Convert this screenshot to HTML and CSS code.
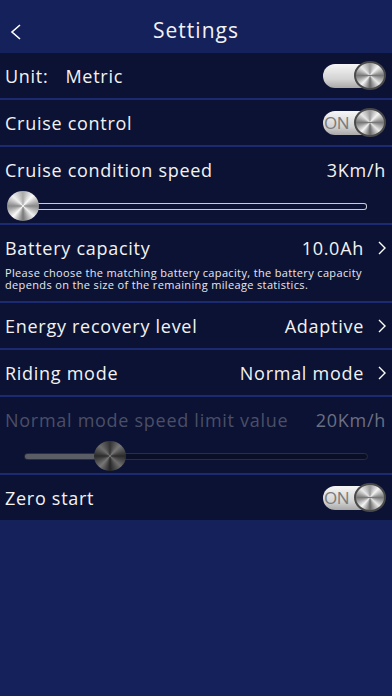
FILE: index.html
```html
<!DOCTYPE html>
<html>
<head>
<meta charset="utf-8">
<link rel="stylesheet" href="styles.css">
</head>
<body>
<div class="header">
  <svg class="back" width="14" height="18" viewBox="0 0 14 18"><path d="M11 2 L3 9 L11 16" fill="none" stroke="#fff" stroke-width="1.6"/></svg>
  <div class="title">Settings</div>
</div>
<div class="list">
  <div class="row">
    <div class="label">Unit:<span class="unitval">Metric</span></div>
    <div class="toggle"><span class="knob"></span></div>
  </div>
  <div class="row">
    <div class="label">Cruise control</div>
    <div class="toggle"><span class="on">ON</span><span class="knob"></span></div>
  </div>
  <div class="row tall">
    <div class="line">
      <div class="label">Cruise condition speed</div>
      <div class="value">3Km/h</div>
    </div>
    <div class="slider">
      <div class="track"></div>
      <span class="sknob first"></span>
    </div>
  </div>
  <div class="row tall">
    <div class="line">
      <div class="label">Battery capacity</div>
      <div class="value">10.0Ah <svg class="chev" width="10" height="16" viewBox="0 0 10 16"><path d="M2 2 L8 8 L2 14" fill="none" stroke="#fff" stroke-width="1.4"/></svg></div>
    </div>
    <p class="desc">Please choose the matching battery capacity, the battery capacity depends on the size of the remaining mileage statistics.</p>
  </div>
  <div class="row">
    <div class="label">Energy recovery level</div>
    <div class="value">Adaptive <svg class="chev" width="10" height="16" viewBox="0 0 10 16"><path d="M2 2 L8 8 L2 14" fill="none" stroke="#fff" stroke-width="1.4"/></svg></div>
  </div>
  <div class="row">
    <div class="label">Riding mode</div>
    <div class="value">Normal mode <svg class="chev" width="10" height="16" viewBox="0 0 10 16"><path d="M2 2 L8 8 L2 14" fill="none" stroke="#fff" stroke-width="1.4"/></svg></div>
  </div>
  <div class="row tall disabled">
    <div class="line">
      <div class="label dim">Normal mode speed limit value</div>
      <div class="value dim2">20Km/h</div>
    </div>
    <div class="slider s2">
      <div class="track dark"><div class="fill" style="width:24%"></div></div>
      <span class="sknob second" style="left:24%"></span>
    </div>
  </div>
  <div class="row">
    <div class="label">Zero start</div>
    <div class="toggle"><span class="on">ON</span><span class="knob"></span></div>
  </div>
</div>
</body>
</html>
```
FILE: styles.css
```css
* { box-sizing: border-box; }
html, body { margin: 0; padding: 0; }
body {
  width: 392px;
  height: 696px;
  background: #15215b;
  font-family: "Open Sans", "Liberation Sans", sans-serif;
  color: #f2f2f2;
  overflow: hidden;
}
.header {
  height: 53px;
  display: flex;
  align-items: center;
  justify-content: center;
  position: relative;
}
.back { position: absolute; left: 9px; top: 23px; }
.title { font-size: 21px; letter-spacing: 1px; margin-top: 6px; }
.list {
  display: flex;
  flex-direction: column;
  gap: 2px;
  background: #1c2a72;
}
.row {
  background: #0c1234;
  height: 45px;
  display: flex;
  align-items: center;
  justify-content: space-between;
  padding: 0 6px 0 5px;
}
.row.tall {
  height: 76px;
  flex-direction: column;
  align-items: stretch;
  justify-content: flex-start;
  padding-top: 10px;
}
.line {
  display: flex;
  justify-content: space-between;
  align-items: center;
  height: 26px;
}
.label { font-size: 18px; letter-spacing: 0.72px; white-space: nowrap; }
.unitval { margin-left: 17px; }
.value { font-size: 18px; letter-spacing: 0.72px; display: flex; align-items: center; gap: 13px; white-space: nowrap; }
.chev { margin-right: -1px; }
.toggle {
  position: relative;
  width: 62px;
  height: 24px;
  border-radius: 12px;
  background: linear-gradient(#f6f6f6, #d2d2d2 65%, #a8a8a8);
  display: flex;
  align-items: center;
  margin-right: 1px;
}
.on {
  color: #7a7a7a;
  font-size: 17px;
  margin-left: 1px;
  letter-spacing: -0.5px;
}
.knob {
  position: absolute;
  right: -1px;
  top: -3px;
  width: 32px;
  height: 29px;
  border-radius: 50%;
  border: 2px solid #4a4a4a;
  background: conic-gradient(#999, #f4f4f4 12%, #777 25%, #e8e8e8 37%, #666 50%, #f4f4f4 62%, #777 75%, #e8e8e8 87%, #999);
}
.slider {
  position: relative;
  height: 34px;
  margin-top: 6px;
}
.track {
  position: absolute;
  left: 17px;
  right: 19px;
  top: 14px;
  height: 7px;
  border: 1.5px solid #c9ccd8;
  border-left: none;
  border-radius: 0 3px 3px 0;
}
.sknob {
  position: absolute;
  top: 2px;
  width: 32px;
  height: 30px;
  border-radius: 50%;
  background: conic-gradient(#aaa, #fafafa 12%, #888 25%, #f0f0f0 37%, #777 50%, #fafafa 62%, #888 75%, #f0f0f0 87%, #aaa);
}
.sknob.first { left: 2px; }
.track.dark {
  left: 19px;
  right: 18px;
  border: 1.5px solid #2a2e3e;
  border-radius: 4px;
  background: #0a0e26;
}
.fill {
  height: 100%;
  background: #5b5d66;
  border-radius: 2px 0 0 2px;
}
.sknob.second {
  transform: translateX(-2px);
  background: conic-gradient(#333, #777 12%, #2a2a2a 25%, #6e6e6e 37%, #252525 50%, #777 62%, #2a2a2a 75%, #6e6e6e 87%, #333);
}
.dim { color: #4b4f66; }
.dim2 { color: #6b6f82; }
.desc {
  margin: 6px 0 0 0;
  font-size: 11px;
  letter-spacing: 0.35px;
  line-height: 12px;
  color: #e8e8ee;
}
```
